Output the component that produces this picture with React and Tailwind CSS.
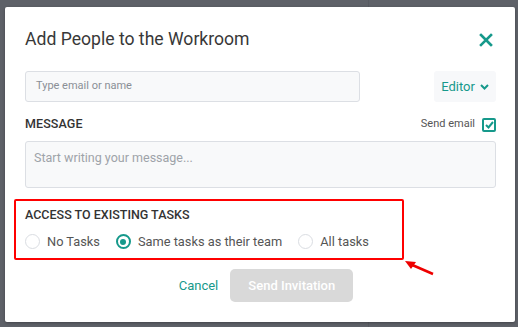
import React from "react";

const teal = "text-[#16998b]";

function Radio({ checked, label }) {
  return (
    <label className="flex items-center gap-[7px]">
      {checked ? (
        <span className="w-[15px] h-[15px] rounded-full border-2 border-[#16998b] flex items-center justify-center">
          <span className="w-[6px] h-[6px] rounded-full bg-[#16998b]" />
        </span>
      ) : (
        <span className="w-[15px] h-[15px] rounded-full border-[1.5px] border-[#dadde2]" />
      )}
      <span className="text-[12.8px] text-[#555]">{label}</span>
    </label>
  );
}

export default function App() {
  return (
    <div
      className="relative w-[518px] h-[327px] bg-[#5e6168] pt-[7px] pl-[5px] overflow-hidden"
      style={{ fontFamily: "Roboto, 'Liberation Sans', sans-serif" }}
    >
      <div className="absolute left-[368px] top-0 w-[1px] h-[327px] bg-[#575a61]" />
      <div className="relative w-[510px] h-[315px] bg-white rounded-[2px] shadow-[0_1px_3px_rgba(0,0,0,0.3)] pt-[20px] pl-[20px] pr-[19px]">
        <div className="flex items-center justify-between h-[24px]">
          <h1 className="text-[17.6px] leading-[24px] text-[#383838] font-normal">Add People to the Workroom</h1>
          <svg width="14" height="14" viewBox="0 0 14 14" className="mr-[3px] mt-[2px]">
            <path d="M2 2 L12 12 M12 2 L2 12" stroke="#16998b" strokeWidth="2.6" strokeLinecap="square" />
          </svg>
        </div>

        <div className="flex justify-between mt-[20px]">
          <div className="w-[335px] h-[31px] rounded-[3px] border border-[#dcdfe4] bg-[#f8f9fa] flex items-center pl-[10px] text-[11px] text-[#8a8f96]">
            Type email or name
          </div>
          <div className="w-[62px] h-[31px] rounded-[3px] bg-[#f7f8fa] flex items-center justify-center gap-[5px]">
            <span className={`text-[13px] ${teal}`}>Editor</span>
            <svg width="9" height="6" viewBox="0 0 9 6">
              <path d="M1 1 L4.5 4.5 L8 1" stroke="#16998b" strokeWidth="2" fill="none" />
            </svg>
          </div>
        </div>

        <div className="flex justify-between items-center mt-[15px] h-[15px]">
          <span className="text-[12.5px] text-[#333] font-medium tracking-[0.1px]">MESSAGE</span>
          <div className="flex items-center gap-[7px]">
            <span className="text-[11px] text-[#555]">Send email</span>
            <span className="w-[14px] h-[14px] border-2 border-[#16998b] rounded-[2px] flex items-center justify-center">
              <svg width="9" height="8" viewBox="0 0 9 8">
                <path d="M1 4 L3.5 6.5 L8 1" stroke="#16998b" strokeWidth="2" fill="none" />
              </svg>
            </span>
          </div>
        </div>

        <div className="mt-[9px] h-[47px] rounded-[3px] border border-[#dcdfe4] bg-[#f8f9fa] pl-[8px] pt-[7px] text-[12.5px] text-[#9ea3a9]">
          Start writing your message...
        </div>

        <div className="mt-[11px] -ml-[11px] w-[390px] h-[61px] border-[2.5px] border-[#ff0000] rounded-[2px] pl-[9px] pt-[6px]">
          <div className="text-[12.5px] leading-[16px] text-[#333] font-medium">ACCESS TO EXISTING TASKS</div>
          <div className="flex items-center gap-[16px] mt-[9px]">
            <Radio label="No Tasks" />
            <Radio checked label="Same tasks as their team" />
            <Radio label="All tasks" />
          </div>
        </div>

        <div className="flex justify-center items-center mt-[9px] pr-[1px]">
          <button className={`px-[12px] text-[13px] ${teal}`}>Cancel</button>
          <button className="w-[123px] h-[33px] rounded-[5px] bg-[#d9d9d9] text-white text-[13px] font-medium">
            Send Invitation
          </button>
        </div>

        <svg className="absolute left-[399px] top-[253px]" width="32" height="16" viewBox="0 0 32 16">
          <path d="M29 14 L6 4" stroke="#ee0000" strokeWidth="2.5" />
          <path d="M1 1 L12 2 L7 9 Z" fill="#ee0000" />
        </svg>
      </div>
    </div>
  );
}
